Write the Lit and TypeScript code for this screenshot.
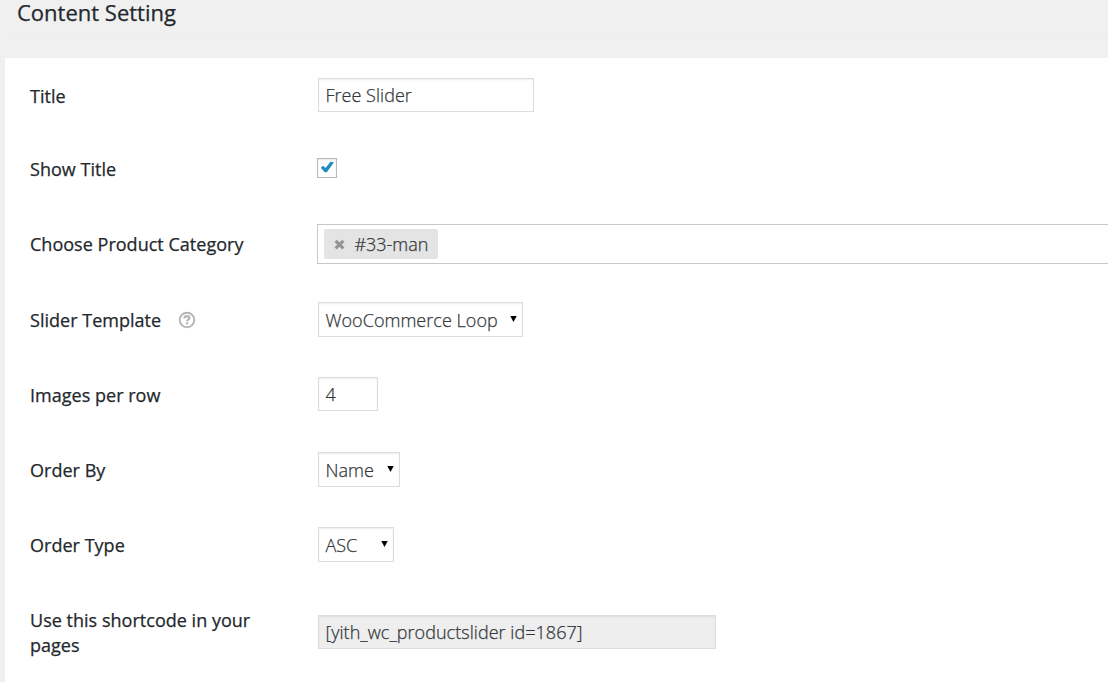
import { LitElement, html, css, TemplateResult } from "lit";
import { customElement, property } from "lit/decorators.js";

@customElement("setting-row")
class SettingRow extends LitElement {
  @property() label = "";
  @property({ type: Boolean }) help = false;

  static styles = css`
    :host { display: grid; grid-template-columns: 287px minmax(0, 1fr); height: 75px; align-items: start; }
    .label { display: flex; align-items: flex-start; gap: 17px; padding-top: 9px; width: 240px; line-height: 25px; font-weight: 500; color: #23282d; letter-spacing: 0.02px; -webkit-text-stroke: 0.25px #23282d; }
    .icon { display: block; flex: none; width: 18px; height: 18px; margin-top: 3px; }
  `;

  render() {
    return html`
      <div class="label"><span>${this.label}</span>${this.help
        ? html`<svg class="icon" viewBox="0 0 18 18">
            <circle cx="9" cy="9" r="7.3" fill="none" stroke="#b4b4b4" stroke-width="1.9" />
            <path d="M6.3 7.3C6.5 5.6 7.7 5.1 9 5.1c1.5 0 2.4.7 2.4 1.9 0 1.6-2.2 1.6-2.3 3.3" fill="none" stroke="#b4b4b4" stroke-width="2.1" />
            <rect x="8" y="11.3" width="2.2" height="2.1" fill="#b4b4b4" />
          </svg>`
        : ""}</div>
      <slot></slot>
    `;
  }
}

@customElement("app-root")
class AppRoot extends LitElement {
  static styles = css`
    :host { display: block; box-sizing: border-box; width: 100%; height: 682px; overflow: hidden; background: #f0f0f0; font-family: "Open Sans", sans-serif; font-size: 18px; color: #32373c; }
    .head { box-sizing: border-box; height: 37px; margin-left: 5px; padding-left: 12px; border-bottom: 1px solid #ededed; }
    .title { margin: 0; font-size: 22px; line-height: 24px; font-weight: 500; color: #23282d; -webkit-text-stroke: 0.25px #23282d; }
    .panel { box-sizing: border-box; height: 624px; margin: 21px 0 0 5px; padding: 17px 0 0 25px; background: #fff; }
    .first { height: 73px; }
    .taller { height: 76px; }
    .box { box-sizing: border-box; display: flex; align-items: center; margin: 3px 0 0 1px; height: 34px; padding: 0 5.5px 0 6.4px; border: 1px solid #ddd; background: #fff; box-shadow: inset 0 1px 2px rgba(0, 0, 0, 0.07); font-weight: 300; letter-spacing: 0.04px; white-space: nowrap; -webkit-text-stroke: 0.25px #32373c; }
    .name { width: 216px; }
    .number { width: 60px; }
    .code { width: 398px; margin-top: 16px; background: #eee; }
    .select { height: 35px; justify-content: space-between; padding-top: 1px; }
    .loop { width: 205px; }
    .order { width: 82px; }
    .type { width: 76px; }
    .arrow { display: block; width: 7px; height: 6px; margin-bottom: 3px; }
    .check { box-sizing: border-box; width: 20px; height: 20px; margin-top: 10px; border: 1px solid #b4b9be; background: #fff; box-shadow: inset 0 1px 2px rgba(0, 0, 0, 0.1); }
    .mark { display: block; width: 18px; height: 18px; }
    .tokens { box-sizing: border-box; height: 40px; margin-top: 1px; padding: 4px 6px; border: 1px solid #c8c8c8; border-right: 0; background: #fff; }
    .token { box-sizing: border-box; display: flex; align-items: center; gap: 9.4px; width: 114px; height: 30px; padding-left: 10px; border-radius: 2px; background: #e4e4e4; font-weight: 300; -webkit-text-stroke: 0.25px #32373c; }
    .remove { display: block; width: 11px; height: 11px; }
  `;

  select(value: string, size: string): TemplateResult {
    return html`<div class="box select ${size}"><span>${value}</span>
      <svg class="arrow" viewBox="0 0 7 6"><path d="M0.3 0h6.4L3.5 6z" fill="#000" /></svg></div>`;
  }

  render() {
    return html`
      <header class="head"><h2 class="title">Content Setting</h2></header>
      <main class="panel">
        <setting-row class="first" label="Title"><div class="box name">Free Slider</div></setting-row>
        <setting-row label="Show Title"><div class="check">
          <svg class="mark" viewBox="0 0 18 18"><path d="M2.8 8.8L5.2 6.8L7.5 9L12.7 2.6L15.8 3.6L8.8 13.2H6.8Z" fill="#1e8cbe" /></svg>
        </div></setting-row>
        <setting-row class="taller" label="Choose Product Category"><div class="tokens"><div class="token">
          <svg class="remove" viewBox="0 0 11 11"><path d="M1.6 1.8L9.4 9.4M9.4 1.8L1.6 9.4" stroke="#949494" stroke-width="3.1" /></svg>
          <span>#33-man</span></div></div></setting-row>
        <setting-row label="Slider Template" help>${this.select("WooCommerce Loop", "loop")}</setting-row>
        <setting-row label="Images per row"><div class="box number">4</div></setting-row>
        <setting-row label="Order By">${this.select("Name", "order")}</setting-row>
        <setting-row label="Order Type">${this.select("ASC", "type")}</setting-row>
        <setting-row label="Use this shortcode in your pages"><div class="box code">[yith_wc_productslider id=1867]</div></setting-row>
      </main>
    `;
  }
}
